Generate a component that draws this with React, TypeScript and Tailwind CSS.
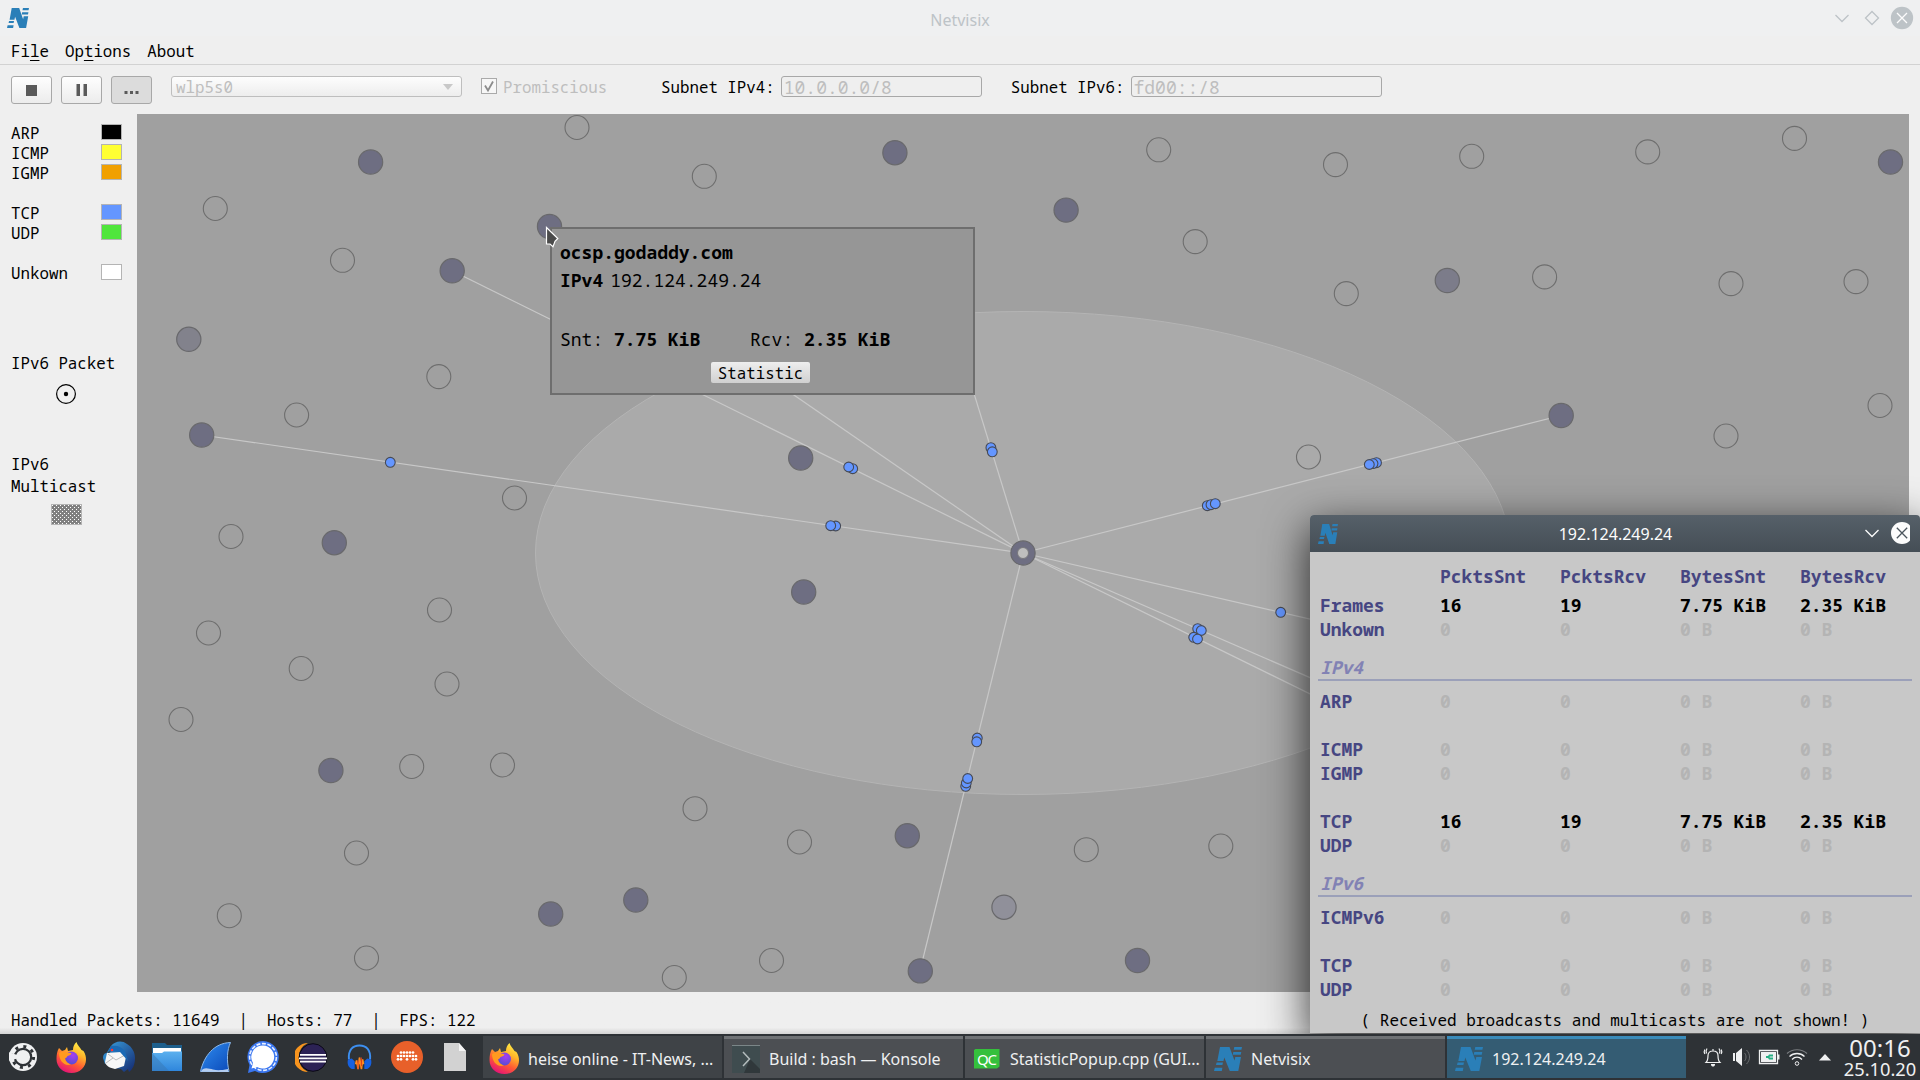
import React from 'react';

const CX = 886;
const CY = 439;

const idleHosts: [number, number][] = [
  [577, 127.5], [704.3, 176.3], [215.3, 208.5], [342.5, 260.3], [1158.7, 149.8], [1335.5, 164.6], [1471.7, 156.3],
  [1647.7, 151.9], [1794.5, 138.4], [1195.2, 241.6], [1346.3, 293.6], [1544.6, 276.9], [1731, 283.6], [1856, 281.6],
  [438.8, 376.6], [296.6, 415], [514.5, 498], [231, 536.5], [439.5, 610], [208.5, 633], [301.2, 668.5], [447, 684],
  [181, 719.5], [411.7, 766.5], [502.5, 765], [356.5, 853], [695, 808.7], [799.5, 842], [1086.3, 849.7], [1220.8, 846],
  [229.3, 915.7], [366.5, 958], [674.3, 977.5], [771.5, 960.5], [1308.5, 457], [1726, 436], [1880, 405.5],
];

const activeHosts: [number, number, string][] = [
  [370.6, 162, '#6e6e82'], [549.5, 226.5, '#6e6e82'], [452.2, 270.8, '#6e6e82'], [894.9, 152.7, '#6e6e82'],
  [1066.1, 210.1, '#6e6e82'], [1890.5, 162, '#6e6e82'], [1447.3, 280.5, '#7c7c8a'], [188.8, 339.3, '#82828c'],
  [201.7, 435, '#6e6e82'], [334.3, 542.7, '#6e6e82'], [1561.2, 415.5, '#6e6e82'], [800.7, 458, '#6e6e82'],
  [803.7, 592, '#6e6e82'], [330.9, 770.5, '#6e6e82'], [907.3, 835.7, '#6e6e82'], [550.7, 914, '#6e6e82'],
  [635.8, 900, '#6e6e82'], [1004, 907.2, '#90909a'], [920.3, 970.9, '#6e6e82'], [1137.5, 960.5, '#6e6e82'],
];

const links: [number, number][] = [
  [452.2, 270.8], [201.7, 435], [549.4, 226.5], [925, 234], [1561, 415.5], [920, 970.7],
  [1577, 680.6], [1577, 793.6], [1577, 825],
];

const packets: [number, number][] = [
  [390.3, 462.3], [852.7, 468.7], [848.7, 467], [835.7, 526], [830.7, 525.7], [990.9, 447.7], [992.3, 451.8],
  [1207.3, 505.7], [1211, 504.7], [1215.3, 503.7], [1376.5, 462.7], [1373, 463.6], [1369.300, 464.5],
  [1280.7, 612.3], [1197.7, 628.7], [1201.3, 630.5],
  [1193.7, 637.3], [1197.5, 639], [977.3, 738], [976.7, 741.8], [965.7, 786.3], [966.3, 783], [967.7, 778.5],
];

function NLogo({ w, h }: { w: number; h: number }) {
  return (
    <svg width={w} height={h} viewBox="0 0 28 24" preserveAspectRatio="none" fill="#2a7fb8" className="shrink-0">
      <path d="M6 0h9.500l5 13.500 .8-3.500h5.700l-2.700 14h-8.500l-5.500-13.500-.8 3.500H3.300z" />
      <path d="M20.300 0H28l-.6 2.800h-7.700zM19.300 5h8l-.6 2.800h-8zM2.600 15.500H9l-.6 2.500H2zM.8 20.800h7.600L7.800 24H0z" />
    </svg>
  );
}

function Firefox() {
  return (
    <svg width="31" height="31" viewBox="0 0 31 31" className="shrink-0">
      <defs>
        <linearGradient id="ffx" x1=".8" y1="0" x2=".3" y2="1">
          <stop offset="0" stopColor="#fff34a" /><stop offset=".35" stopColor="#ffb52a" />
          <stop offset=".65" stopColor="#ff5a33" /><stop offset="1" stopColor="#e3107a" />
        </linearGradient>
        <radialGradient id="ffp" cx=".6" cy=".3" r=".8">
          <stop offset="0" stopColor="#a83df0" /><stop offset="1" stopColor="#4a4fd0" />
        </radialGradient>
      </defs>
      <path fill="url(#ffx)" d="M3 6l3 3 3-1 2-3 1 4 5-1c0-3 1-6 3.500-8 .5 3 3.500 5 5 8l2 1c2 3 2.500 6 2.500 8.500C30 25 24 31 15.500 31 7 31 .5 25 .5 17 .5 13 1 9 3 6z" />
      <circle cx="15.500" cy="16" r="6.500" fill="url(#ffp)" />
      <path fill="#ff9a1f" d="M3 11c3-2 6-1.500 8-.5 2 .3 3.500.3 4.500 1-1 2-3 2-4 2.500-.8 1.500-1.500 2-2.500 2.500.5 3 3 5 6 6-7 2-12-4-12-11.500z" />
    </svg>
  );
}

function Launchers() {
  return (
    <>
      <svg width="28" height="28" viewBox="0 0 28 28">
        <circle cx="14" cy="14" r="14" fill="#eff0f1" />
        <circle cx="14" cy="14" r="8.200" fill="none" stroke="#2e3236" strokeWidth="2.200" />
        <circle cx="14" cy="14" r="10.600" fill="none" stroke="#2e3236" strokeWidth="3" strokeDasharray="3 5.330" />
        <path d="M14 14L-1 9v9z" fill="#eff0f1" />
      </svg>
      <Firefox />
      <svg width="32" height="32" viewBox="0 0 32 32">
        <defs><linearGradient id="tb" x1="0" y1="0" x2="1" y2="1"><stop offset="0" stopColor="#3ba3e0" /><stop offset="1" stopColor="#14286f" /></linearGradient></defs>
        <path fill="url(#tb)" d="M8 5C12 0 19-1 24 3c5 3 8 8 8 14 0 6-2 11-6 14l-1-3-4 3-3-3C8 27 0 22 1 16z" />
        <path fill="#2e86c8" d="M0 17c0-4 2-5 4-5l3 8-5 3z" />
        <path fill="#f7f7f7" d="M4 12l14-1 5 5-2 9-9 3c-5-1-9-3-10-7z" />
        <path d="M5 13l8 6 9-5M3 22l7-5" stroke="#bbb" fill="none" />
        <path fill="#1b6ab5" d="M8 5c5-1 10 0 14 5l3 10-8-9-12-1z" />
        <circle cx="9" cy="9" r="1.300" fill="#f33" /><path d="M4 11l4-1-2 2z" fill="#333" />
      </svg>
      <svg width="30" height="28" viewBox="0 0 30 28">
        <defs><linearGradient id="fd" x1="0" y1="0" x2="0" y2="1"><stop offset="0" stopColor="#5bb0ee" /><stop offset="1" stopColor="#2f86dc" /></linearGradient></defs>
        <path d="M0 0h13l2 2h15v14H0z" fill="#1e5f8c" /><path d="M1 5h28v8H1z" fill="#fff" />
        <path d="M0 10h10l2-1.500h18V28H0z" fill="url(#fd)" /><path d="M0 10l17 18H0z" fill="#3878b4" opacity=".5" />
      </svg>
      <svg width="31" height="30" viewBox="0 0 31 30">
        <defs><linearGradient id="ws" x1="0" y1="0" x2="1" y2="1"><stop offset="0" stopColor="#2f8df0" /><stop offset="1" stopColor="#0b49b8" /></linearGradient></defs>
        <path d="M.5 29.500C4 14 14 1 30.500.5 27 8 26.500 18 29 29.500z" fill="url(#ws)" stroke="#8fb9e8" />
        <path d="M1 29.500c2-5 8-3 12-2s8 1 15-.5v3z" fill="#b4cdf0" />
      </svg>
      <svg width="32" height="32" viewBox="0 0 32 32">
        <path d="M16 0a16 16 0 1 1-8 30L1 32l1.500-8A16 16 0 0 1 16 0z" fill="#3a76f0" />
        <circle cx="16" cy="16" r="13.400" fill="none" stroke="#e8f0ff" strokeWidth="1.600" strokeDasharray="4 1.600" />
        <path d="M16 4.500A11.500 11.500 0 1 1 10 26l-5.500 1.500L6 22A11.500 11.500 0 0 1 16 4.500z" fill="#fff" />
      </svg>
      <svg width="32" height="29" viewBox="0 0 32 29">
        <path d="M13 0A14.500 14.500 0 0 0 13 29 16 16 0 0 1 13 0z" fill="#f7941e" />
        <circle cx="18" cy="14.500" r="13.800" fill="#2c2255" stroke="#0a0815" />
        <path d="M5 11h26v1.800H5zM4 14.400h28v1.900H4zM5 17.800h26v1.800H5z" fill="#fff" />
      </svg>
      <svg width="25" height="27" viewBox="0 0 26 28">
        <path d="M2 16C1 6 6 1.500 13 1.500S25 6 24 16" stroke="#3d8ff0" strokeWidth="2" fill="none" />
        <path d="M1 16l4-1 3 3v8H5c-4-2-5-6-4-10zM25 16l-4-1-3 3v8h3c4-2 5-6 4-10z" fill="#1761e0" />
        <path d="M9 21l1-4 1.500 9L13 14l2 12 1.200-10 1 5" stroke="#ff8a1f" strokeWidth="1.700" fill="none" />
        <path d="M11.500 17v9M15 14v9" stroke="#e33b1a" />
      </svg>
      <svg width="32" height="32" viewBox="0 0 32 32">
        <circle cx="16" cy="16" r="16" fill="#e8602a" />
        <g fill="#fff">
          {[10, 13, 16, 19, 22].map((x) => <circle key={x} cx={x} cy="11.500" r="1.350" />)}
          {[7, 10, 13, 16, 19, 22, 25].map((x) => <circle key={x} cx={x} cy="15" r="1.350" />)}
          {[7, 10, 16, 22, 25].map((x) => <circle key={x} cx={x} cy="18.300" r="1.350" />)}
        </g>
      </svg>
      <svg width="22" height="28" viewBox="0 0 22 28">
        <path d="M0 0h15l7 8v20H0z" fill="#d2d2d2" /><path d="M15 0v8h7z" fill="#f4f4f4" />
      </svg>
    </>
  );
}

function Task({ icon, label, plain, active }: { icon: React.ReactNode; label: string; plain?: boolean; active?: boolean }) {
  const tone = active
    ? 'bg-[#345c73] border-[#3a8bba]'
    : plain ? 'bg-[#3f4347] border-[#3f4347]' : 'bg-[#4c4f53] border-[#6f7275]';
  return (
    <div className={'flex h-[42px] w-[239px] shrink-0 items-center border-t-[3px] pl-[6px] ' + tone}>
      <div className="flex w-[31px] shrink-0 justify-center">{icon}</div>
      <span className="ml-[8px] whitespace-nowrap text-[16px] text-[#eff0f1]">{label}</span>
    </div>
  );
}

function Network() {
  return (
    <svg width="1772" height="878" viewBox="0 0 1772 878" className="block bg-[#a0a0a0]">
      <ellipse cx={CX} cy={CY} rx="487.500" ry="241.500" fill="#aaaaaa" stroke="#b4b4b4" />
      {links.map(([x, y], i) => (
        <line key={i} x1={CX} y1={CY} x2={x - 137} y2={y - 114} stroke="#c8c8c8" strokeWidth="1.200" />
      ))}
      {idleHosts.map(([x, y], i) => (
        <circle key={i} cx={x - 137} cy={y - 114} r="12" fill="none" stroke="#6e6e6e" strokeWidth="1.100" />
      ))}
      {activeHosts.map(([x, y, c], i) => (
        <circle key={i} cx={x - 137} cy={y - 114} r="12.100" fill={c} stroke="#69696c" strokeWidth="1.200" />
      ))}
      <circle cx={CX} cy={CY} r="12.100" fill="#6e6e82" stroke="#69696c" strokeWidth="1.200" />
      <circle cx={CX} cy={CY} r="5.500" fill="#bebebe" stroke="#78787c" />
      {packets.map(([x, y], i) => (
        <circle key={i} cx={x - 137} cy={y - 114} r="4.900" fill="#6496ff" stroke="#464a55" strokeWidth="1.100" />
      ))}
    </svg>
  );
}

function HostTooltip() {
  return (
    <div className="absolute left-[550px] top-[227px] flex h-[168px] w-[425px] flex-col border-2 border-[#6e6e6e] bg-[#969696] pl-[8px] font-[Noto_Sans_Mono,DejaVu_Sans_Mono,monospace] text-[18px] leading-[28px] text-black">
      <div className="mt-[9px] font-bold">ocsp.godaddy.com</div>
      <div className="flex gap-[7px]"><b>IPv4</b><span>192.124.249.24</span></div>
      <div className="mt-[31px] flex whitespace-pre">
        <div className="w-[190px]">Snt: <b>7.75 KiB</b></div>
        <div>Rcv: <b>2.35 KiB</b></div>
      </div>
      <button className="ml-[151px] mt-[9px] h-[21px] w-[99px] rounded-[2px] bg-linear-to-b from-[#eeeeee] to-[#d0d0d0] text-[15.800px] leading-[20px]">Statistic</button>
    </div>
  );
}

function StatRow({ cells, h = 24, head }: { cells: string[]; h?: number; head?: boolean }) {
  return (
    <div className="grid grid-cols-[120px_120px_120px_120px_1fr] items-center whitespace-pre pl-[10px]" style={{ height: h }}>
      {cells.map((c, i) => (
        <span key={i} className={i === 0 || head ? 'text-[#464682]' : c[0] === '0' ? 'text-[#b4b4b4]' : 'text-black'}>{c}</span>
      ))}
    </div>
  );
}

const zero = ['0', '0', '0 B', '0 B'];
const used = ['16', '19', '7.75 KiB', '2.35 KiB'];

function Section({ title }: { title: string }) {
  return <div className="mx-[8px] mt-[11px] mb-[7px] h-[30px] border-b-2 border-[#9ba0b9] pl-[2px] leading-[20px] pt-[6px] italic text-[#8282b4]">{title}</div>;
}

function StatWindow() {
  return (
    <div className="absolute left-[1310px] top-[515px] flex h-[518px] w-[610px] flex-col rounded-t-[4px] bg-[#c8c8c8] shadow-[0_14px_44px_2px_rgba(0,0,0,0.75)]">
      <div className="flex h-[37px] shrink-0 items-center rounded-t-[4px] bg-linear-to-b from-[#566069] to-[#454e56] pl-[8px]">
        <NLogo w={20} h={20} />
        <div className="flex-1 pl-[33px] pt-[1px] text-center text-[16px] text-[#fcfcfc]">192.124.249.24</div>
        <svg width="50" height="24" viewBox="0 0 50 24" fill="none" className="mr-[10px] -mt-[2px]">
          <path d="M5.500 9L12 15.500 18.500 9" stroke="#fcfcfc" strokeWidth="1.300" />
          <circle cx="42" cy="12" r="11" fill="#fcfcfc" /><path d="M36.800 6.800l10.400 10.400M47.200 6.800L36.800 17.200" stroke="#4b555d" strokeWidth="1.300" />
        </svg>
      </div>
      <div className="flex flex-col pt-[8px] font-[Noto_Sans_Mono,DejaVu_Sans_Mono,monospace] text-[17.950px] font-bold">
        <StatRow head h={32} cells={['', 'PcktsSnt', 'PcktsRcv', 'BytesSnt', 'BytesRcv']} />
        <StatRow cells={['Frames', ...used]} />
        <StatRow cells={['Unkown', ...zero]} />
        <Section title="IPv4" />
        <StatRow cells={['ARP', ...zero]} />
        <StatRow cells={['']} />
        <StatRow cells={['ICMP', ...zero]} />
        <StatRow cells={['IGMP', ...zero]} />
        <StatRow cells={['']} />
        <StatRow cells={['TCP', ...used]} />
        <StatRow cells={['UDP', ...zero]} />
        <Section title="IPv6" />
        <StatRow cells={['ICMPv6', ...zero]} />
        <StatRow cells={['']} />
        <StatRow cells={['TCP', ...zero]} />
        <StatRow cells={['UDP', ...zero]} />
        <div className="mt-[8px] text-center text-[16px] font-normal leading-[24px] text-black">( Received broadcasts and multicasts are not shown! )</div>
      </div>
    </div>
  );
}

function Legend({ name, color }: { name: string; color: string }) {
  return (
    <div className="flex h-[20px] items-center justify-between">
      <span className="pt-[1px]">{name}</span>
      <span className="h-[16px] w-[21px] border border-[#b4b4b4]" style={{ background: color }} />
    </div>
  );
}

function ToolButton({ children, pressed }: { children: React.ReactNode; pressed?: boolean }) {
  return (
    <button className={'flex h-[28px] w-[41px] items-center justify-center rounded-[3px] border border-[#a8a8a8] ' + (pressed ? 'bg-[#dcdcdc]' : 'bg-linear-to-b from-[#fefefe] to-[#ececec]')}>
      <svg width="16" height="14" viewBox="0 0 16 14" fill="#5a5a5a">{children}</svg>
    </button>
  );
}

export default function App() {
  return (
    <div className="relative flex h-[1080px] w-[1920px] flex-col overflow-hidden bg-[#efefef] font-['Noto_Sans',sans-serif] text-black">
      <header className="flex h-[36px] shrink-0 items-center bg-[#eff0f1] pl-[7px]">
        <NLogo w={22} h={20} />
        <div className="flex-1 pl-[57px] pt-[3px] text-center text-[16px] text-[#bdc3c7]">Netvisix</div>
        <svg width="80" height="24" viewBox="0 0 80 24" fill="none" stroke="#bdc3c7" strokeWidth="1.300" className="mr-[6px]">
          <path d="M1.500 9L8 15.500 14.500 9M38 5.500l6.500 6.500-6.500 6.500-6.500-6.500z" />
          <circle cx="68" cy="12" r="10.500" fill="#bdc3c7" /><path d="M63 7l10 10M73 7L63 17" stroke="#fcfcfc" />
        </svg>
      </header>
      <div className="flex min-h-0 flex-1 flex-col font-[Noto_Sans_Mono,DejaVu_Sans_Mono,monospace] text-[15.800px]">
        <nav className="flex h-[29px] shrink-0 gap-[16px] border-b border-[#d2d2d2] pl-[11px] leading-[31px] underline-offset-[3px]">
          <span>Fi<u>l</u>e</span><span>Op<u>t</u>ions</span><span>About</span>
        </nav>
        <div className="flex h-[49px] shrink-0 items-start pl-[11px] pt-[11px] leading-[22px]">
          <div className="flex gap-[9px]">
            <ToolButton><rect x="2" y="2" width="11" height="11" /></ToolButton>
            <ToolButton><path d="M2.500 1H6v12H2.500zM9.500 1H13v12H9.500z" /></ToolButton>
            <ToolButton pressed><path d="M.5 8h3v3h-3zM6 8h3v3H6zM11.500 8h3v3h-3z" /></ToolButton>
          </div>
          <div className="ml-[19px] flex h-[21px] w-[291px] items-center justify-between rounded-[3px] border border-[#bebebe] bg-linear-to-b from-[#fdfdfd] to-[#ededed] pl-[4px] pr-[8px] text-[#bebebe]">
            <span>wlp5s0</span>
            <svg width="10" height="6" viewBox="0 0 10 6" fill="#c8c8c8"><path d="M0 0h10L5 6z" /></svg>
          </div>
          <svg width="16" height="16" viewBox="0 0 16 16" fill="none" className="ml-[19px] mt-[2px]">
            <rect x=".5" y=".5" width="15" height="15" fill="#f7f7f7" stroke="#aaaaaa" /><path d="M4 7.500l3 5 5-9" stroke="#8c8c8c" strokeWidth="1.800" />
          </svg>
          <span className="ml-[6px] w-[158px] text-[#bebebe]">Promiscious</span>
          <span>Subnet IPv4:</span>
          <div className="ml-[6px] h-[21px] w-[201px] rounded-[3px] border border-[#a8a8a8] pl-[2px] text-[18px] leading-[20px] text-[#bebebe]">10.0.0.0/8</div>
          <span className="ml-[29px]">Subnet IPv6:</span>
          <div className="ml-[6px] h-[21px] w-[251px] rounded-[3px] border border-[#a8a8a8] pl-[2px] text-[18px] leading-[20px] text-[#bebebe]">fd00::/8</div>
        </div>
        <div className="flex h-[878px] shrink-0">
          <aside className="w-[137px] shrink-0 pl-[11px] pr-[15px] pt-[8px] leading-[20px]">
            <Legend name="ARP" color="#000000" />
            <Legend name="ICMP" color="#ffff32" />
            <Legend name="IGMP" color="#f0a000" />
            <div className="h-[20px]" />
            <Legend name="TCP" color="#6496ff" />
            <Legend name="UDP" color="#50e63c" />
            <div className="h-[20px]" />
            <Legend name="Unkown" color="#ffffff" />
            <div className="mt-[71px]">IPv6 Packet</div>
            <svg width="20" height="20" viewBox="0 0 20 20" className="ml-[45px] mt-[11px]"><circle cx="10" cy="10" r="9.400" fill="none" stroke="#000" strokeWidth="1.200" /><circle cx="10" cy="10" r="2.200" /></svg>
            <div className="mt-[49px] leading-[22px]">IPv6<br />Multicast</div>
            <svg width="31" height="21" className="ml-[40px] mt-[7px]">
              <defs><pattern id="dots" width="4" height="4" patternUnits="userSpaceOnUse"><rect width="4" height="4" fill="#808080" /><path d="M1 1h1v1H1zM3 3h1v1H3z" fill="#fff" shapeRendering="crispEdges" /></pattern></defs>
              <rect x=".5" y=".5" width="30" height="20" fill="url(#dots)" stroke="#b4b4b4" />
            </svg>
          </aside>
          <Network />
        </div>
        <footer className="flex-1 whitespace-pre bg-linear-to-b from-[#efefef] from-85% to-[#d4d4d4] pl-[11px] pt-[16px] leading-[24px]">Handled Packets: 11649  |  Hosts: 77  |  FPS: 122</footer>
      </div>
      <HostTooltip />
      <svg width="14" height="23" viewBox="0 0 14 23" className="absolute left-[545px] top-[226px]">
        <path d="M1.500 1.500v16.500h3.500l3 2.800 2-5.500 2.800-2.800z" fill="#4b4b4b" stroke="#fff" strokeWidth="1.200" />
      </svg>
      <StatWindow />
      <div className="relative flex h-[46px] shrink-0 items-center bg-[#2e3236]">
        <div className="grid w-[483px] shrink-0 grid-cols-[repeat(10,48px)] items-center justify-items-center pr-[3px] [&>svg]:-translate-x-[1px]"><Launchers /></div>
        <div className="flex gap-[2px]">
          <Task plain icon={<Firefox />} label="heise online - IT-News, ..." />
          <Task label="Build : bash — Konsole" icon={
            <svg width="28" height="28" viewBox="0 0 28 28"><path d="M0 0h28v28H0z" fill="#3f4c4f" /><path d="M18 14l10 10v4H12z" fill="#30383b" /><path d="M0 .5h28" stroke="#7b8688" /><path d="M11 7l6.500 7L11 21" stroke="#b4bcbd" strokeWidth="1.500" fill="none" /></svg>} />
          <Task label="StatisticPopup.cpp (GUI..." icon={
            <div className="h-[20px] w-[26px] bg-[#35c03c] text-center text-[15px] leading-[20px] tracking-[-1px] text-white [clip-path:polygon(10%_0,100%_0,100%_90%,90%_100%,0_100%,0_10%)]">QC</div>} />
          <Task label="Netvisix" icon={<NLogo w={28} h={24} />} />
          <Task active label="192.124.249.24" icon={<NLogo w={28} h={24} />} />
        </div>
        <svg width="140" height="24" viewBox="0 0 140 24" fill="none" stroke="#eff0f1" className="ml-[14px] shrink-0">
          <path d="M6 17.500c2-2 2-4 2-7 0-3 2-4.500 5-4.500s5 1.500 5 4.500c0 3 0 5 2 7zM7 3.500C6 5 6 7 6.500 8.500M19 3.500c1 1.500 1 3.500.5 5M4.800 4.500c-.8 1.500-.8 3 0 4.500M21.200 4.500c.8 1.500 .8 3 0 4.500M13 4v2" strokeWidth="1.200" />
          <path d="M11 19h4v1c-1 2-3 2-4 0z" fill="#eff0f1" stroke="none" />
          <path d="M33 8h2v8h-2zM36 8l6-5v18l-6-5z" fill="#eff0f1" stroke="none" />
          <path d="M44.500 8c2 2 2 6 0 8M46.500 5c4 4 4 10 0 14" stroke="#6b6e71" />
          <path d="M59.500 5.500h18v13h-18z" strokeWidth="1.300" /><path d="M61 7h15v10H61zM78 9.500h1.500v5H78z" fill="#eff0f1" stroke="none" />
          <path d="M66 12h3M73 10.500h-3.500l-1 1.500 1 1.500H73" stroke="#27ae84" strokeWidth="1.800" />
          <path d="M87 8.500c5.500-5 14.500-5 20 0" stroke="#7a7d80" strokeWidth="1.200" /><path d="M89.500 11.500c4-4 11-4 15 0M92 14.500c3-3 7-3 10 0" strokeWidth="1.300" /><circle cx="97" cy="18.500" r="1.800" />
          <path d="M119 15.500l6-6.500 6 6.500z" fill="#eff0f1" stroke="none" />
        </svg>
        <div className="flex flex-1 flex-col items-center whitespace-nowrap text-[#eff0f1]">
          <span className="text-[24px] leading-[23px]">00:16</span>
          <span className="text-[18.300px] leading-[19px]">25.10.20</span>
        </div>
      </div>
    </div>
  );
}
